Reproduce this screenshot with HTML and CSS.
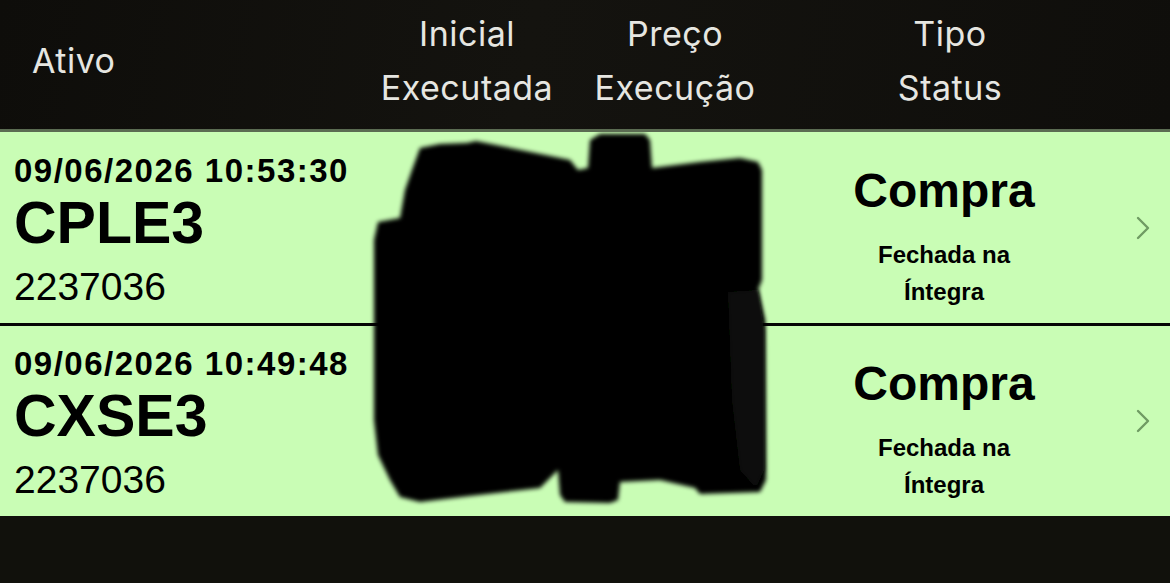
FILE: index.html
```html
<!DOCTYPE html>
<html>
<head>
	<title>Ordens</title>
	<link rel="stylesheet" href="styles.css">
</head>
<body>
	<div class="cabecalho">
		<div class="col-ativo">Ativo</div>
		<div class="col-centro">Inicial<br>Executada</div>
		<div class="col-centro">Preço<br>Execução</div>
		<div class="col-centro">Tipo<br>Status</div>
		<div></div>
	</div>

	<div class="lista">
		<div class="linha">
			<div class="ativo">
				<div class="data">09/06/2026 10:53:30</div>
				<div class="papel">CPLE3</div>
				<div class="conta">2237036</div>
			</div>
			<div></div>
			<div></div>
			<div class="tipo">
				<div class="compra">Compra</div>
				<div class="status">Fechada na<br>Íntegra</div>
			</div>
			<div class="seta">
				<svg width="14" height="24" viewBox="0 0 14 24"><path d="M2 2 L12 12 L2 22" fill="none" stroke="#6f9b63" stroke-width="2.4" stroke-linecap="round" stroke-linejoin="round"/></svg>
			</div>
		</div>
		<div class="linha">
			<div class="ativo">
				<div class="data">09/06/2026 10:49:48</div>
				<div class="papel">CXSE3</div>
				<div class="conta">2237036</div>
			</div>
			<div></div>
			<div></div>
			<div class="tipo">
				<div class="compra">Compra</div>
				<div class="status">Fechada na<br>Íntegra</div>
			</div>
			<div class="seta">
				<svg width="14" height="24" viewBox="0 0 14 24"><path d="M2 2 L12 12 L2 22" fill="none" stroke="#6f9b63" stroke-width="2.4" stroke-linecap="round" stroke-linejoin="round"/></svg>
			</div>
		</div>

		<!-- tarja preta por cima dos valores -->
		<svg class="tarja" width="1170" height="386" viewBox="0 132 1170 386">
			<defs>
				<filter id="borrao"><feGaussianBlur stdDeviation="2"/></filter>
			</defs>
			<path filter="url(#borrao)" fill="#030303" d="M420 148 L440 144 L467 143 L476 141 L570 160 L578 170 L588 168 L590 140 L600 134 L645 134 L650 140 L652 168 L700 162 L740 158 L758 162 L762 170 L762 280 L758 290 L765 320 L766 480 L760 492 L700 494 L695 488 L660 480 L620 482 L618 500 L610 503 L565 502 L560 495 L558 470 L540 488 L470 496 L420 502 L400 497 L390 480 L378 455 L374 420 L374 240 L378 222 L400 218 L405 190 L412 170 Z"/>
			<path filter="url(#borrao)" fill="#0c110b" d="M728 292 L758 290 L764 330 L764 470 L756 488 L740 470 L732 400 Z"/>
		</svg>
	</div>
</body>
</html>
```

FILE: styles.css
```css
body
{
	margin: 0;
	background-color: #11110c;
	height: 583px;
	overflow: hidden;
}
.cabecalho
{
	display: grid;
	grid-template-columns: 360px 214px 202px 348px 46px;
	align-items: center;
	height: 121px;
	padding-bottom: 8px;
	border-bottom: 3px solid #5b6c52;
	background: linear-gradient(100deg, #0e0d0a 0%, #14130f 45%, #0f0e0b 100%);
	color: #e6e6e1;
	font-family: Inter, "Noto Sans", sans-serif;
	font-size: 34px;
	letter-spacing: 0.5px;
	line-height: 54px;
}
.col-ativo
{
	padding-left: 32px;
}
.col-centro
{
	text-align: center;
}
.lista
{
	position: relative;
}
.linha
{
	display: grid;
	grid-template-columns: 360px 214px 202px 336px 58px;
	align-items: center;
	height: 191px;
	background-color: #c9fdb5;
	border-bottom: 3px solid #050505;
	font-family: "Liberation Sans", Arial, sans-serif;
	color: #000;
}
.linha:last-of-type
{
	height: 190px;
	border-bottom: none;
}
.ativo
{
	padding-left: 14px;
	padding-top: 7px;
}
.data
{
	font-size: 33px;
	font-weight: bold;
	letter-spacing: 1.5px;
	line-height: 36px;
	margin-bottom: 3px;
}
.papel
{
	font-size: 59px;
	font-weight: bold;
	line-height: 62px;
	margin-bottom: 10px;
}
.conta
{
	font-size: 39px;
	line-height: 46px;
}
.tipo
{
	text-align: center;
	padding-top: 17px;
}
.compra
{
	font-size: 48px;
	font-weight: bold;
	line-height: 56px;
	margin-bottom: 17px;
}
.status
{
	font-size: 24px;
	font-weight: bold;
	line-height: 37px;
}
.seta
{
	display: flex;
	align-items: center;
	padding-left: 24px;
}
.tarja
{
	position: absolute;
	left: 0;
	top: 0;
	pointer-events: none;
}
```
